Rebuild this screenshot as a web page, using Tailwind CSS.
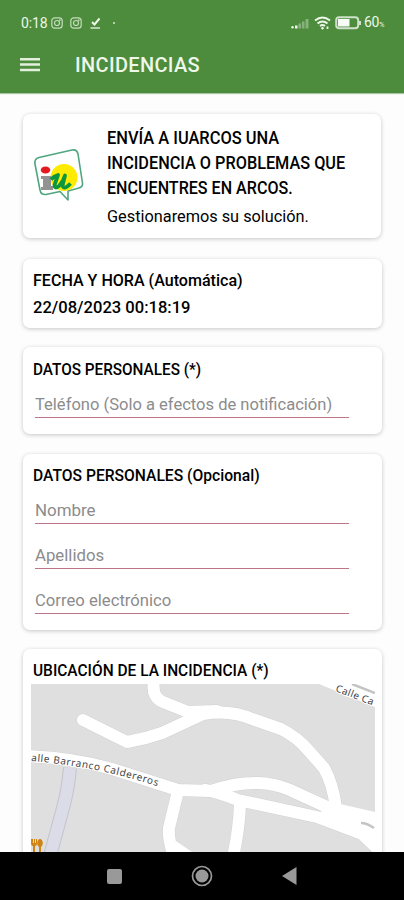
<!DOCTYPE html>
<html lang="es">
<head>
<meta charset="utf-8">
<title>Incidencias</title>
<script src="https://cdn.jsdelivr.net/npm/@tailwindcss/browser@4"></script>
</head>
<body class="w-[404px] h-[900px] overflow-hidden bg-[#fdfdfd] font-['Roboto',sans-serif] text-black">
<div class="flex h-[900px] flex-col">
  <header class="h-[93px] shrink-0 bg-[#4c8c3c] text-[#eef7e9] shadow-[0_1px_1px_#a9c7a2]">
    <div class="flex h-[46px] items-start justify-between pt-[15px] pl-[21px] pr-[20px]">
      <div class="flex h-4 items-center">
        <span class="w-[30px] text-[14px] leading-4 tracking-[-0.1px] whitespace-nowrap">0:18</span>
        <svg class="h-3 w-3" viewBox="0 0 12 12" fill="none" stroke="#c5dcbd" stroke-width="1.2"><rect x=".8" y=".8" width="10.4" height="10.4" rx="3"/><circle cx="6" cy="6" r="2.5"/><circle cx="8.8" cy="3.2" r=".3"/></svg>
        <svg class="ml-[7px] h-3 w-3" viewBox="0 0 12 12" fill="none" stroke="#c5dcbd" stroke-width="1.2"><rect x=".8" y=".8" width="10.4" height="10.4" rx="3"/><circle cx="6" cy="6" r="2.5"/><circle cx="8.8" cy="3.2" r=".3"/></svg>
        <svg class="ml-2 h-3 w-[11px]" viewBox="0 0 11 12" fill="none" stroke="#eef7e9"><path d="M2 5l2.5 2.500L9.500 1.500" stroke-width="2"/><path d="M.5 11h9.500" stroke-width="1.300"/></svg>
        <span class="ml-[12px] h-[2px] w-[2px] rounded-full bg-[#d5e7cf]"></span>
      </div>
      <div class="flex h-4 items-center">
        <svg class="h-3 w-[18px]" viewBox="0 0 18 12"><circle cx="1.500" cy="10.300" r="1.200" fill="#eef7e9"/><path d="M4 8.500h2.500V11.500H4z" fill="#eef7e9"/><path d="M7.500 6.500h2.500v5H7.500zM11 4.500h2.500v7H11zM14.500 2h3v9.500h-3z" fill="#86b27b"/></svg>
        <svg class="ml-[5px] h-[14px] w-[17px]" viewBox="0 0 17 14" fill="none" stroke="#eef7e9" stroke-width="2"><path d="M1 4.500Q8.500-1.500 16 4.500M3.500 7.500Q8.500 3.500 13.500 7.500M6 10Q8.500 8.200 11 10"/><path d="M7.500 11.500l1 1 1-1M13.500 10.500v2.500" stroke-width="1.800"/></svg>
        <svg class="ml-[4px] h-[14px] w-[27px]" viewBox="0 0 27 14"><rect x="1.200" y="1.200" width="22" height="11" rx="3" fill="none" stroke="#cfe2c9" stroke-width="2"/><rect x="3" y="3" width="11.500" height="7.500" fill="#f7fcf4"/><path d="M25 5v4" stroke="#cfe2c9" stroke-width="2"/></svg>
        <span class="ml-[2px] text-[14px] leading-4 tracking-[-0.300px]">60<span class="text-[7px]">%</span></span>
      </div>
    </div>
    <div class="flex h-[38px] items-center pl-5">
      <svg class="h-4 w-[20px]" viewBox="0 0 20 16" stroke="#e3f0de" stroke-width="2.400"><path d="M0 2.200h20M0 7.500h20M0 13h20"/></svg>
      <h1 class="ml-[35px] text-[20px] leading-6 font-medium tracking-[0.330px]">INCIDENCIAS</h1>
    </div>
  </header>

  <main class="flex h-[759px] flex-col overflow-hidden pl-[23px] pr-[22px] pt-[21px]">
    <section class="flex h-[124px] w-[358px] shrink-0 rounded-[7px] bg-white pl-[10px] shadow-[0_1px_4px_rgba(0,0,0,0.22)]">
      <svg class="mt-[33px] h-[56px] w-[52px] shrink-0" viewBox="0 0 52 56">
        <path d="M6 10.500L39 3Q44 2 45 7L49.500 36Q50 40 46 41L35 44V53L27 44.500L13 47.500Q8 48 7 43L2 17Q1 12 6 10.500Z" fill="#fff" stroke="#4fa681" stroke-width="1.600" stroke-linejoin="round"/>
        <circle cx="31" cy="30.500" r="13.500" fill="#ffeb00"/>
        <ellipse cx="12.500" cy="23" rx="4.800" ry="3.500" fill="#e41920"/>
        <path d="M8 29h10v10h2v4H8v-3h2v-8H8z" fill="#929292"/>
        <path d="M18 32.500Q21 29 25 28L21.500 38Q21.500 42.500 26 39Q30 35 32 28.500L29.500 38.500Q31 43.500 37.500 36.500" fill="none" stroke="#0c963e" stroke-width="3.800" stroke-linejoin="round"/>
      </svg>
      <div class="ml-[22px] pt-[11px] text-[18px] leading-[25px] whitespace-nowrap">
        <p class="origin-left scale-x-[.912] font-medium">ENVÍA A IUARCOS UNA</p>
        <p class="origin-left scale-x-[.903] font-medium">INCIDENCIA O PROBLEMAS QUE</p>
        <p class="origin-left scale-x-[.894] font-medium">ENCUENTRES EN ARCOS.</p>
        <p class="mt-[4px] origin-left scale-x-[.959] text-[17px]">Gestionaremos su solución.</p>
      </div>
    </section>

    <section class="mt-[21px] h-[69px] w-[359px] shrink-0 rounded-[7px] bg-white pt-[8px] pl-[10px] text-[17px] leading-[27px] whitespace-nowrap shadow-[0_1px_4px_rgba(0,0,0,0.22)]">
      <p class="origin-left scale-x-[.945] font-medium">FECHA Y HORA (Automática)</p>
      <p class="origin-left scale-x-[.974] font-medium">22/08/2023 00:18:19</p>
    </section>

    <section class="mt-[19px] h-[87px] w-[359px] shrink-0 rounded-[7px] bg-white pt-[9px] pl-[10px] shadow-[0_1px_4px_rgba(0,0,0,0.22)]">
      <h2 class="origin-left scale-x-[.9] text-[17px] leading-[26px] font-medium whitespace-nowrap">DATOS PERSONALES (*)</h2>
      <div class="mt-[9px] ml-[2px] h-[27px] w-[314px] border-b border-[#bc7486] text-[17px] leading-[26px] whitespace-nowrap text-[#8c8c8c]"><p class="origin-left scale-x-[.973]">Teléfono (Solo a efectos de notificación)</p></div>
    </section>

    <section class="mt-[20px] h-[176px] w-[359px] shrink-0 rounded-[7px] bg-white pt-[8px] pl-[10px] shadow-[0_1px_4px_rgba(0,0,0,0.22)]">
      <h2 class="origin-left scale-x-[.92] text-[17px] leading-[26px] font-medium whitespace-nowrap">DATOS PERSONALES (Opcional)</h2>
      <div class="ml-[2px] flex w-[314px] flex-col pt-[9px] text-[17px] leading-[26px] whitespace-nowrap text-[#8c8c8c]">
        <div class="h-[27px] border-b border-[#bc7486]"><p class="origin-left scale-x-[.995]">Nombre</p></div>
        <div class="mt-[18px] h-[27px] border-b border-[#bc7486]"><p class="origin-left scale-x-[.987]">Apellidos</p></div>
        <div class="mt-[18px] h-[27px] border-b border-[#bc7486]"><p class="origin-left scale-x-[.98]">Correo electrónico</p></div>
      </div>
    </section>

    <section class="mt-[19px] h-[230px] w-[359px] shrink-0 rounded-[7px] bg-white pt-[8px] pl-[8px] shadow-[0_1px_4px_rgba(0,0,0,0.22)]">
      <h2 class="mb-px ml-[2px] origin-left scale-x-[.91] text-[17px] leading-[26px] font-medium whitespace-nowrap">UBICACIÓN DE LA INCIDENCIA (*)</h2>
      <svg class="block h-[168px] w-[344px]" viewBox="31 684 344 168">
        <path d="M31 684h344v168H31z" fill="#dfdfdf"/>
        <path d="M70 768Q68 790 63 808L50 856" fill="none" stroke="#c4c4cc" stroke-width="14"/>
        <path d="M70 768Q68 790 63 808L50 856" fill="none" stroke="#dcdce8" stroke-width="12"/>
        <g fill="none" stroke="#d2d2d2" stroke-width="13" stroke-linecap="round" stroke-linejoin="round">
          <path d="M153 678L154 692Q156 699 163 702L188 712L217 711"/>
          <path d="M83 720L127 742Q145 739 162 733L203 714Q230 709 255 720L281 729Q297 737 308 750L324 768Q333 784 336 808"/>
          <path d="M20 756Q70 757 112 769L178 790L211 791Q235 783 254 783Q272 782 290 790L338 812L382 821"/>
          <path d="M205 790Q218 792 238 800L317 817L362 834L382 853"/>
          <path d="M177 795L169 828Q168 840 174 856M240 804Q239 830 233 857"/>
        </g>
        <g fill="none" stroke="#fff" stroke-width="12" stroke-linecap="round" stroke-linejoin="round">
          <path d="M153 678L154 692Q156 699 163 702L188 712L217 711"/>
          <path d="M83 720L127 742Q145 739 162 733L203 714Q230 709 255 720L281 729Q297 737 308 750L324 768Q333 784 336 808"/>
          <path d="M20 756Q70 757 112 769L178 790L211 791Q235 783 254 783Q272 782 290 790L338 812L382 821"/>
          <path d="M205 790Q218 792 238 800L317 817L362 834L382 853"/>
          <path d="M177 795L169 828Q168 840 174 856M240 804Q239 830 233 857"/>
        </g>
        <path d="M320 812L340 804L375 812V850L362 840L320 822zM176 841L192 852H173zM319 684L375 707V684z" fill="#fff"/>
        <path d="M352 684l23 9M361 823Q367 823 374 828" fill="none" stroke="#c4c4c4" stroke-width="2.500"/>
        <path id="barranco" d="M31 761Q95 766 160 787" fill="none"/>
        <text font-family="Noto Sans" font-size="10" fill="#444" stroke="#fff" stroke-width="2" paint-order="stroke"><textPath href="#barranco" textLength="129">alle Barranco Caldereros</textPath></text>
        <text transform="translate(335 691) rotate(21)" font-family="Noto Sans" font-size="10" fill="#444" stroke="#fff" stroke-width="2" paint-order="stroke" textLength="40">Calle Ca</text>
        <path d="M31 839v4q0 3 2 3v6h2v-6q2 0 2-3v-4h-1v4h-1v-4h-1v4h-1v-4zM40 839c-3 0-4 6-1 8v5h2v-5c3-2 2-8-1-8z" fill="#d08416"/>
      </svg>
    </section>
  </main>

  <nav class="flex h-[48px] shrink-0 items-center bg-black pl-[107px]">
    <span class="h-[15px] w-[15px] rounded-[2px] bg-[#999]"></span>
    <svg class="ml-[69px] h-[22px] w-[22px]" viewBox="0 0 22 22"><circle cx="11" cy="11" r="9.500" fill="none" stroke="#999" stroke-width="1.700"/><circle cx="11" cy="11" r="6.500" fill="#999"/></svg>
    <svg class="ml-[69px] h-[18px] w-[15px]" viewBox="0 0 15 18"><path d="M14.500 0v18L0 9z" fill="#999"/></svg>
  </nav>
</div>
</body>
</html>
